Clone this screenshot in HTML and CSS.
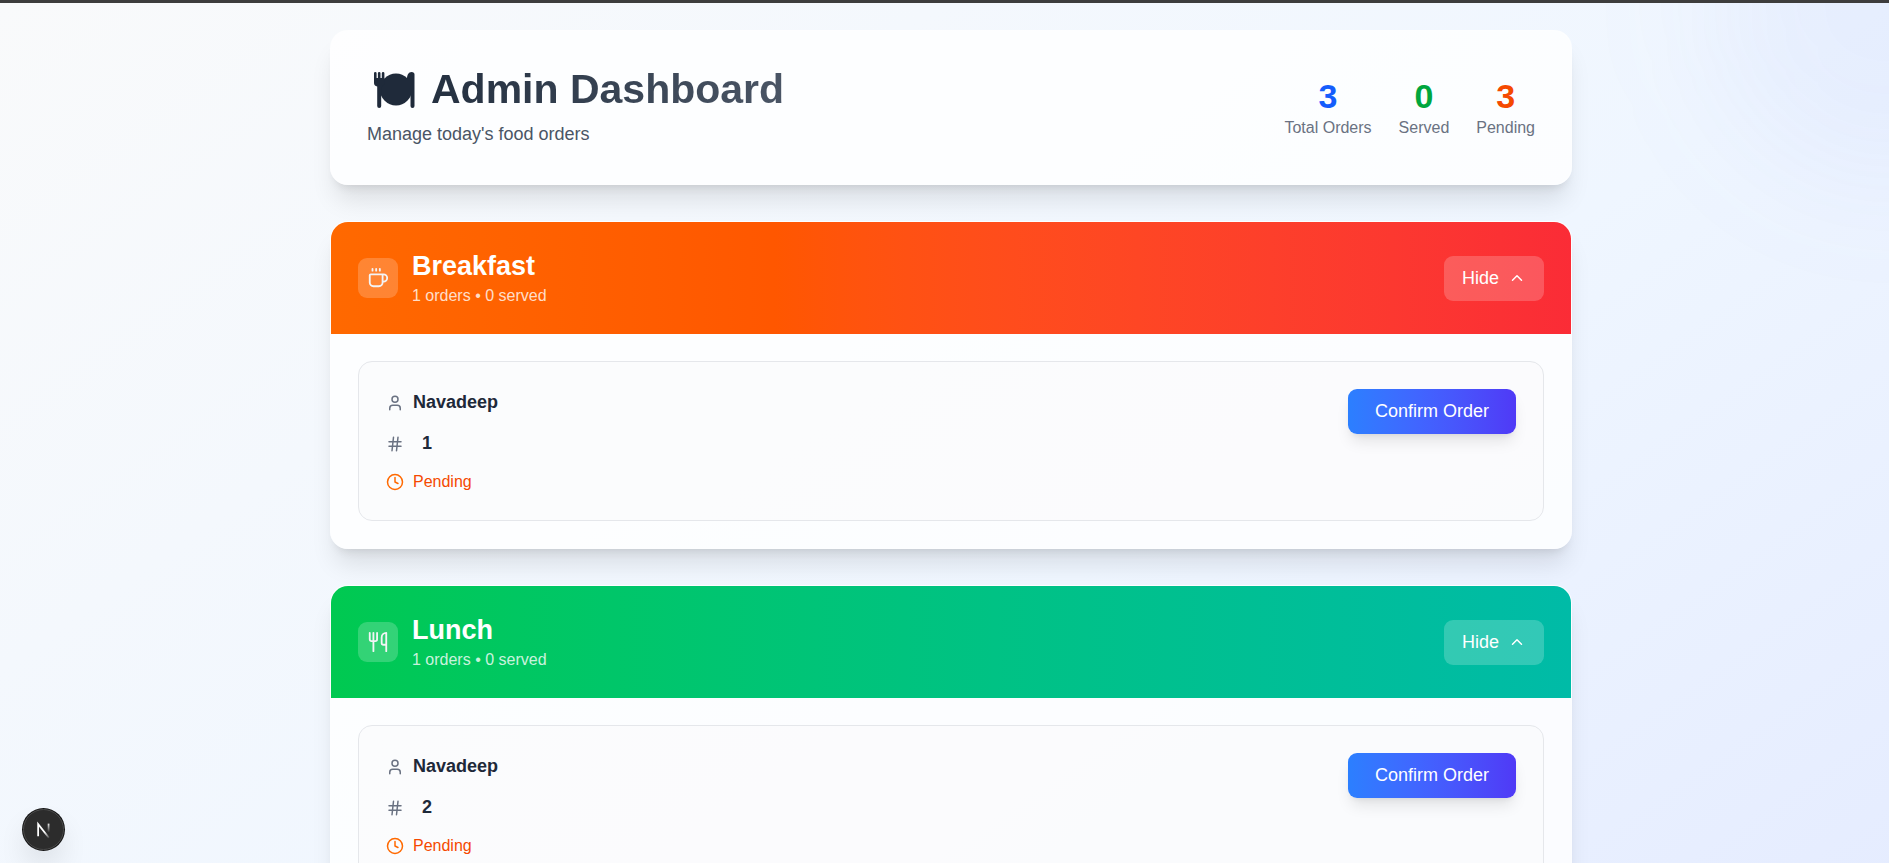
FILE: index.html
```html
<!DOCTYPE html>
<html lang="en">
<head>
<meta charset="utf-8">
<meta name="viewport" content="width=device-width, initial-scale=1">
<title>Admin Dashboard</title>
<link rel="stylesheet" href="styles.css">
</head>
<body>
<svg class="sprite" aria-hidden="true">
  <symbol id="user" viewBox="0 0 24 24"><path d="M19 21v-2a4 4 0 0 0-4-4H9a4 4 0 0 0-4 4v2"/><circle cx="12" cy="7" r="4"/></symbol>
  <symbol id="hash" viewBox="0 0 24 24"><path d="M4 9h16M4 15h16M10 3 8 21M16 3l-2 18"/></symbol>
  <symbol id="clock" viewBox="0 0 24 24"><circle cx="12" cy="12" r="10"/><path d="M12 6v6l4 2"/></symbol>
  <symbol id="chevron" viewBox="0 0 24 24"><path d="m18 15-6-6-6 6"/></symbol>
  <symbol id="coffee" viewBox="0 0 24 24"><path d="M10 2v2M14 2v2M6 2v2M16 8a1 1 0 0 1 1 1v8a4 4 0 0 1-4 4H7a4 4 0 0 1-4-4V9a1 1 0 0 1 1-1h14a4 4 0 1 1 0 8h-1"/></symbol>
  <symbol id="utensils" viewBox="0 0 24 24"><path d="M3 2v7c0 1.1.9 2 2 2h4a2 2 0 0 0 2-2V2M7 2v20M21 15V2a5 5 0 0 0-5 5v6c0 1.1.9 2 2 2h3Zm0 0v7"/></symbol>
</svg>
<div class="page">
  <div class="backdrop" aria-hidden="true"><div class="glow"></div></div>
  <main class="content">
    <header class="card masthead">
      <div>
        <h1 class="title">
          <svg class="plate" viewBox="0 0 42 36" aria-hidden="true">
            <circle cx="22" cy="17.5" r="16"/>
            <path d="M0 1.300a1.300 1.300 0 0 1 2.600 0V6h1.300V1.300a1.300 1.300 0 0 1 2.600 0V6h1.300V1.300a1.300 1.300 0 0 1 2.600 0V11c0 2-1 3-3.200 3.500V34a2 2 0 0 1-4 0V14.500C1 14 0 13 0 11Z"/>
            <path d="M33 7c0-4 1.500-7 4.500-7C39.500 0 40.500 1 40.500 2.500V34a2 2 0 0 1-4 0V21H33Z"/>
          </svg>
          <span class="title-text">Admin Dashboard</span>
        </h1>
        <p class="subtitle">Manage today's food orders</p>
      </div>
      <dl class="stats">
        <div class="stat"><dt>Total Orders</dt><dd class="blue">3</dd></div>
        <div class="stat"><dt>Served</dt><dd class="green">0</dd></div>
        <div class="stat"><dt>Pending</dt><dd class="orange">3</dd></div>
      </dl>
    </header>

    <section class="card">
      <div class="meal breakfast">
        <span class="meal-icon"><svg class="icon large"><use href="#coffee"/></svg></span>
        <div class="meal-text"><h2>Breakfast</h2><p>1 orders • 0 served</p></div>
        <button class="toggle" type="button">Hide <svg class="icon"><use href="#chevron"/></svg></button>
      </div>
      <div class="orders">
        <article class="order">
          <ul class="details">
            <li class="name"><svg class="icon"><use href="#user"/></svg>Navadeep</li>
            <li class="name"><svg class="icon"><use href="#hash"/></svg><span class="quantity">1</span></li>
            <li class="status"><svg class="icon"><use href="#clock"/></svg>Pending</li>
          </ul>
          <button class="confirm" type="button">Confirm Order</button>
        </article>
      </div>
    </section>

    <section class="card">
      <div class="meal lunch">
        <span class="meal-icon"><svg class="icon large"><use href="#utensils"/></svg></span>
        <div class="meal-text"><h2>Lunch</h2><p>1 orders • 0 served</p></div>
        <button class="toggle" type="button">Hide <svg class="icon"><use href="#chevron"/></svg></button>
      </div>
      <div class="orders">
        <article class="order">
          <ul class="details">
            <li class="name"><svg class="icon"><use href="#user"/></svg>Navadeep</li>
            <li class="name"><svg class="icon"><use href="#hash"/></svg><span class="quantity">2</span></li>
            <li class="status"><svg class="icon"><use href="#clock"/></svg>Pending</li>
          </ul>
          <button class="confirm" type="button">Confirm Order</button>
        </article>
      </div>
    </section>
  </main>
</div>
<button class="devtools" type="button" aria-label="Open developer tools">
  <svg viewBox="0 0 40 40" aria-hidden="true">
    <defs>
      <linearGradient id="fade-a" x1="22" y1="22" x2="27" y2="29" gradientUnits="userSpaceOnUse"><stop stop-color="#fff"/><stop offset="1" stop-color="#fff" stop-opacity="0"/></linearGradient>
      <linearGradient id="fade-b" x1="0" y1="13" x2="0" y2="23" gradientUnits="userSpaceOnUse"><stop stop-color="#fff"/><stop offset="1" stop-color="#fff" stop-opacity="0"/></linearGradient>
    </defs>
    <path d="M14.500 27V14.500L25.500 28.500" fill="none" stroke="url(#fade-a)" stroke-width="1.800"/>
    <path d="M24.300 14h1.800v10h-1.800z" fill="url(#fade-b)"/>
  </svg>
</button>
</body>
</html>
```
FILE: styles.css
```css
* { box-sizing: border-box; margin: 0; padding: 0; }

html { overflow: hidden; }

body {
  font: 18px/27px "Liberation Sans", Arial, sans-serif;
  color: #1e2939;
}

button { font: inherit; color: inherit; border: 0; cursor: pointer; }

ul { list-style: none; }

.sprite { display: none; }

.page {
  position: relative;
  min-height: 1340px;
  padding: 27px 27px 36px 40px;
  border-top: 3px solid #3d3d3d;
  background: linear-gradient(to bottom right in oklab, #f9fafb, #eff6ff, #e0e7ff);
}

.backdrop { position: absolute; inset: 0; overflow: hidden; }

.glow {
  position: absolute;
  top: -180px;
  right: -180px;
  width: 360px;
  height: 360px;
  border-radius: 50%;
  background: #5a70f00e;
  filter: blur(64px);
}

.content {
  position: relative;
  display: flex;
  flex-direction: column;
  gap: 36px;
  max-width: 1242px;
  margin: 0 auto;
}

.card {
  overflow: hidden;
  border: 1px solid rgb(255 255 255 / 0.2);
  border-radius: 18px;
  background: rgb(255 255 255 / 0.8);
  box-shadow: 0 20px 25px -5px rgb(0 0 0 / 0.1), 0 8px 10px -6px rgb(0 0 0 / 0.1);
}

.masthead {
  display: flex;
  align-items: center;
  justify-content: space-between;
  padding: 36px;
}

.title {
  display: flex;
  align-items: center;
  gap: 15px;
  margin-bottom: 9px;
  padding-left: 7px;
  font-size: 41px;
  line-height: 45px;
}

.title-text {
  color: transparent;
  background: linear-gradient(to right, #243040, #4a5565);
  background-clip: text;
}

.plate { width: 42px; height: 36px; fill: #1f2a3a; }

.subtitle { color: #4a5565; }

.stats { display: flex; gap: 27px; text-align: center; }

.stat { display: flex; flex-direction: column-reverse; }

.stat dt { font-size: 16px; line-height: 23px; color: #6a7282; }

.stat dd { font-size: 34px; font-weight: 700; line-height: 40px; }

.blue { color: #155dfc; }
.green { color: #00a63e; }
.orange { color: #f54900; }

.icon {
  flex: none;
  width: 18px;
  height: 18px;
  fill: none;
  stroke: currentColor;
  stroke-width: 2;
  stroke-linecap: round;
  stroke-linejoin: round;
}

.large { width: 22px; height: 22px; }

.meal {
  display: flex;
  align-items: center;
  gap: 14px;
  padding: 27px;
  color: #fff;
}

.breakfast { background: linear-gradient(to right in oklab, oklch(70.5% 0.213 47.604), oklch(63.7% 0.237 25.331)); }
.lunch { background: linear-gradient(to right in oklab, oklch(72.3% 0.219 149.579), oklch(70.4% 0.14 182.503)); }

.meal-icon {
  display: flex;
  padding: 9px;
  border-radius: 9px;
  color: #f3f4f6;
  background: rgb(255 255 255 / 0.2);
}

.meal-text { flex: 1; }

.meal-text h2 { margin-bottom: 2px; font-size: 27px; line-height: 34px; }

.meal-text p { font-size: 16px; line-height: 22px; color: rgb(255 255 255 / 0.8); }

.toggle {
  display: flex;
  align-items: center;
  gap: 9px;
  padding: 9px 18px;
  border-radius: 9px;
  background: rgb(255 255 255 / 0.2);
}

.orders { padding: 27px; }

.order {
  display: flex;
  align-items: flex-start;
  justify-content: space-between;
  padding: 27px;
  border: 1px solid #e5e7eb;
  border-radius: 14px;
  background: rgb(249 250 251 / 0.5);
}

.details { display: flex; flex-direction: column; gap: 14px; }

.details li { display: flex; align-items: center; gap: 9px; }

.name { font-weight: 700; }

.name .icon { color: #6a7282; }

.quantity { padding-left: 9px; }

.status { font-size: 16px; line-height: 22px; color: #f54900; }

.status .icon { color: #ff6900; }

.confirm {
  padding: 9px 27px;
  border-radius: 9px;
  color: #fff;
  background: linear-gradient(to right in oklab, oklch(62.3% 0.214 259.815), oklch(51.1% 0.262 276.966));
  box-shadow: 0 10px 15px -3px rgb(0 0 0 / 0.1), 0 4px 6px -4px rgb(0 0 0 / 0.1);
}

.devtools {
  position: fixed;
  bottom: 13px;
  left: 23px;
  width: 41px;
  height: 41px;
  border: 1px solid #4a4a4a;
  border-radius: 50%;
  background: #2c2c2c;
  box-shadow: 0 0 0 1px #171717, 0 16px 32px -8px rgb(0 0 0 / 0.24);
}

.devtools svg { display: block; }
```
